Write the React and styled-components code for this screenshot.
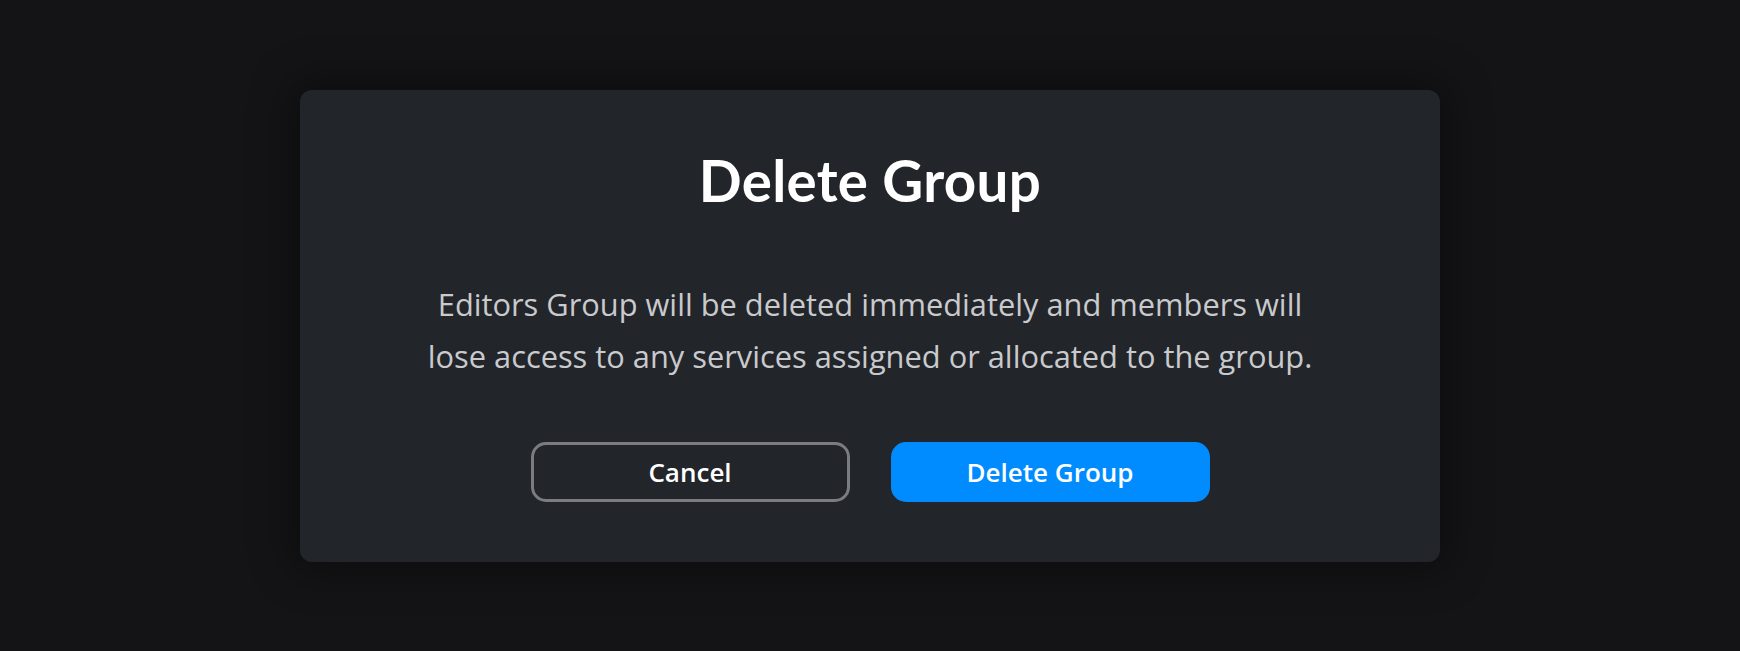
import styled, { createGlobalStyle } from "styled-components";

const GlobalStyle = createGlobalStyle`
  html, body {
    margin: 0;
    padding: 0;
    background: #141416;
  }
  #root {
    min-height: 100vh;
  }
`;

const Backdrop = styled.main`
  width: 100%;
  height: 651px;
  display: flex;
  justify-content: center;
  align-items: center;
  background: #141416;
`;

const Dialog = styled.section`
  width: 1140px;
  height: 472px;
  box-sizing: border-box;
  padding: 57px 0 0;
  /* p-top 57px */
  background: #222529;
  border-radius: 12px;
  box-shadow: 0 0 40px 10px rgba(0, 0, 0, 0.35);
  display: flex;
  flex-direction: column;
  align-items: center;
`;

const Title = styled.h1`
  margin: 0;
  font-family: "Lato", "Liberation Sans", sans-serif;
  font-weight: 700;
  font-size: 56.5px;
  line-height: 1.2;
  color: #ffffff;
  letter-spacing: 0.3px;
`;

const Message = styled.p`
  margin: 64px 0 0;
  font-family: "Open Sans", "Liberation Sans", sans-serif;
  font-weight: 400;
  font-size: 30.8px;
  line-height: 52px;
  color: #c9cacd;
  text-align: center;
`;

const Actions = styled.div`
  margin-top: 60px;
  display: flex;
  gap: 41px;
`;

const Button = styled.button`
  width: 319px;
  height: 60px;
  box-sizing: border-box;
  border-radius: 15px;
  font-family: "Open Sans", "Liberation Sans", sans-serif;
  font-weight: 600;
  font-size: 26px;
  color: #ffffff;
  cursor: pointer;
  display: flex;
  justify-content: center;
  align-items: center;
  padding: 0;
  border: ${(p) => (p.$primary ? "none" : "3px solid #7a7c80")};
  background: ${(p) => (p.$primary ? "#008cff" : "transparent")};
`;

const App = () => {
  return (
    <>
      <GlobalStyle />
      <Backdrop>
        <Dialog role="dialog" aria-labelledby="delete-title">
          <Title id="delete-title">Delete Group</Title>
          <Message>
            Editors Group will be deleted immediately and members will
            <br />
            lose access to any services assigned or allocated to the group.
          </Message>
          <Actions>
            <Button>Cancel</Button>
            <Button $primary>Delete Group</Button>
          </Actions>
        </Dialog>
      </Backdrop>
    </>
  );
};

export default App;
